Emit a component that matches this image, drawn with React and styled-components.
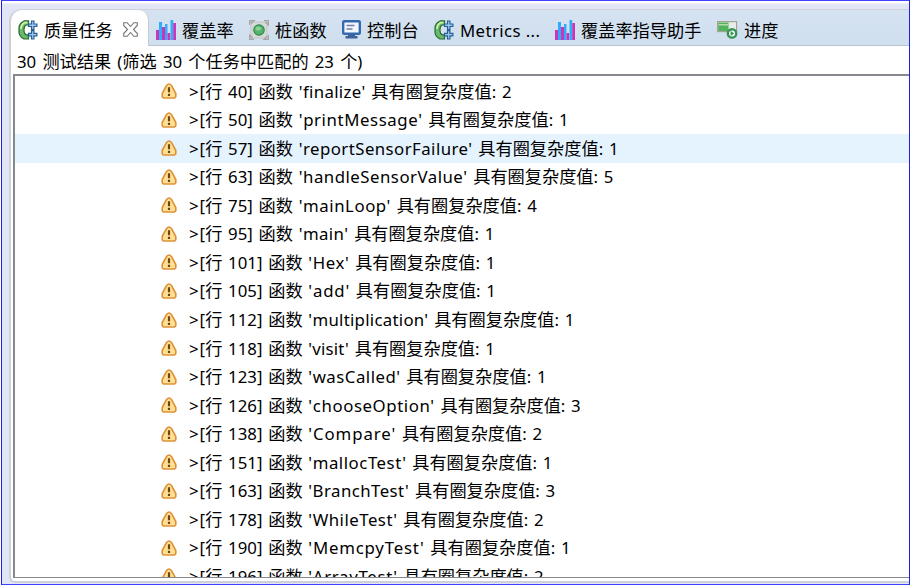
import styled, { createGlobalStyle } from 'styled-components'

const results = [
    { line: 40, name: 'finalize', value: 2, tracking: .35 },
    { line: 50, name: 'printMessage', value: 1, tracking: .6 },
    { line: 57, name: 'reportSensorFailure', value: 1, tracking: .45, hovered: true },
    { line: 63, name: 'handleSensorValue', value: 5, tracking: .5 },
    { line: 75, name: 'mainLoop', value: 4, tracking: .55 },
    { line: 95, name: 'main', value: 1, tracking: .4 },
    { line: 101, name: 'Hex', value: 1, tracking: .6 },
    { line: 105, name: 'add', value: 1, tracking: .8 },
    { line: 112, name: 'multiplication', value: 1, tracking: .28 },
    { line: 118, name: 'visit', value: 1, tracking: .2 },
    { line: 123, name: 'wasCalled', value: 1, tracking: .5 },
    { line: 126, name: 'chooseOption', value: 3, tracking: .6 },
    { line: 138, name: 'Compare', value: 2, tracking: .9 },
    { line: 151, name: 'mallocTest', value: 1, tracking: .54 },
    { line: 163, name: 'BranchTest', value: 3, tracking: .46 },
    { line: 178, name: 'WhileTest', value: 2, tracking: .5 },
    { line: 190, name: 'MemcpyTest', value: 1, tracking: .8 },
    { line: 196, name: 'ArrayTest', value: 2, tracking: .68 },
]

const QualityIcon = () => (
    <svg width="20" height="20" viewBox="0 0 20 20">
        <path d="M10.5 .8H6.5Q1 3.5 1 8v4q0 4.5 5 7h4.5v-4.2H8.3Q6 13.5 6 11V9q0-3 2.3-4h2.2z" fill="#6db86b" stroke="#226b35" strokeWidth="1.2" />
        <path d="M9.5 2.6H7Q3 4.5 3 9" fill="none" stroke="#d3f0a5" strokeWidth="1.7" />
        <path d="M13.5 1h2.4v3h3v2.5h-3v3h-2.4v-3h-3V4h3zM13.5 10.6h2.4v2.8h3v2.4h-3V19h-2.4v-3.2h-3v-2.4h3z" fill="#9bcbf2" stroke="#2a5f94" strokeWidth="1.2" />
    </svg>
)

const CoverageIcon = () => (
    <svg width="20" height="20" viewBox="0 0 20 20">
        <path d="M3 2h3v18H3zM9 4h2.5v16H9zM14.5 0h2.7v20h-2.7z" fill="#2caef8" />
        <path d="M0 10h3v10H0zM6 7h3v13H6zM11.5 13h2.7v7h-2.7zM17.2 3H20v17h-2.8z" fill="#cc35ba" />
    </svg>
)

const StubIcon = () => (
    <svg width="20" height="20" viewBox="0 0 20 20">
        <path d="M2 2h16v16H2z" fill="#d5d9d9" stroke="#c4c6c4" />
        <path d="M.7 5V.7H5L2 3.5M15 .7h4.3V5l-3-3M19.3 15v4.3H15l3-3M5 19.3H.7V15l3 3" fill="none" stroke="#a5a5a2" strokeWidth="1.3" />
        <circle cx="10" cy="10" r="5.2" fill="#54b36c" stroke="#308a4b" strokeWidth="1.2" />
        <ellipse cx="9.2" cy="8.4" rx="2.8" ry="2" fill="#8bd197" />
    </svg>
)

const ConsoleIcon = () => (
    <svg width="19" height="19" viewBox="0 0 19 19">
        <rect x="1.2" y="1.2" width="16.6" height="12.6" rx="1" fill="#f3f7fc" stroke="#3569ae" strokeWidth="2.4" />
        <path d="M4.5 5.5h8M4.5 9h6" stroke="#6c7eaa" strokeWidth="1.3" />
        <path d="M6 14.5h7V16h2.5v2.5h-12V16H6z" fill="#3e6297" />
    </svg>
)

const ProgressIcon = () => (
    <svg width="21" height="18" viewBox="0 0 21 18">
        <rect x=".6" y=".6" width="19" height="10" fill="#e6ece8" stroke="#a6a298" strokeWidth="1.2" />
        <path d="M1.2 1.6h10.3v8.4H1.2z" fill="#52b35d" />
        <path d="M1.5 3.8H11" stroke="#b1dda6" strokeWidth="1.6" />
        <circle cx="15" cy="12.4" r="4.2" fill="#fff" stroke="#369456" strokeWidth="2.4" />
        <path d="M13.6 9.8l3.6 2.6-3.6 2.6z" fill="#389851" />
    </svg>
)

const CloseIcon = () => (
    <svg width="15" height="15" viewBox="0 0 15 15">
        <path d="M.7.7h3.5l3.3 3.8L10.8.7h3.5v2.8L10.5 7.5l3.8 4v2.8h-3.5l-3.3-3.8-3.3 3.8H.7v-2.8l3.8-4L.7 3.5z" fill="#fff" stroke="#777" strokeWidth="1.1" />
    </svg>
)

const WarningIcon = () => (
    <svg width="16" height="16" viewBox="0 0 16 16">
        <path d="M5.6 2.4Q8-.4 10.4 2.4L14.8 10.5v3.2l-1.2 1.3H2.4l-1.2-1.3v-3.2z" fill="#ffdf94" stroke="#de9238" strokeWidth="1.6" strokeLinejoin="round" />
        <path d="M8 4.3v5M8 10.8v2.2" stroke="#6b4511" strokeWidth="2.2" />
    </svg>
)

const tabs = [
    { label: '质量任务', icon: <QualityIcon />, width: 138, active: true },
    { label: '覆盖率', icon: <CoverageIcon />, width: 93 },
    { label: '桩函数', icon: <StubIcon />, width: 93 },
    { label: '控制台', icon: <ConsoleIcon />, width: 92 },
    { label: 'Metrics ...', icon: <QualityIcon />, width: 121, latin: true },
    { label: '覆盖率指导助手', icon: <CoverageIcon />, width: 162 },
    { label: '进度', icon: <ProgressIcon />, width: 90 },
]

const App = () => {
    return (
        <Window>
            <GlobalStyle />
            <Folder>
                <TabBar>
                    {tabs.map(tab => (
                        <Tab key={tab.label} $active={tab.active} $width={tab.width}>
                            {tab.icon}
                            <TabLabel $latin={tab.latin}>{tab.label}</TabLabel>
                            {tab.active && <CloseIcon />}
                        </Tab>
                    ))}
                </TabBar>
                <Summary>
                    30 <Han>测试结果</Han> (<Han>筛选</Han> 30 <Han>个任务中匹配的</Han> 23 <Han>个</Han>)
                </Summary>
                <ResultList>
                    {results.map(({ line, name, value, tracking, hovered }) => (
                        <Row key={line} $hovered={hovered}>
                            <WarningIcon />
                            <Message>
                                <Arrow>&gt;</Arrow>[<Han>行</Han> {line}] <Han>函数</Han> <Name $tracking={tracking}>'{name}'</Name> <Han>具有圈复杂度值</Han>: {value}
                            </Message>
                        </Row>
                    ))}
                </ResultList>
            </Folder>
        </Window>
    )
}

export default App

const GlobalStyle = createGlobalStyle`
    * {
        box-sizing: border-box;
    }

    body {
        margin: 0;
        overflow: hidden;
        background: #fff;
    }
`

const Window = styled.div`
    width: 909px;
    height: 585px;
    margin-left: 1px;
    padding: 8px 0 1px 7px;
    border: 1px solid #2020e8;
    border-top-color: #4040ff;
    border-bottom-color: #4040ff;
    background: linear-gradient(#fff 0, #fff 2px, #e1e5f6 3px);
    font-family: "Noto Sans", "Noto Sans CJK SC", sans-serif;
    font-size: 16.8px;
    color: #000;
`

const Folder = styled.div`
    display: flex;
    flex-direction: column;
    height: 574px;
    border: 2px solid #ced1d7;
    border-top-width: 1px;
    border-right: none;
    border-radius: 12px 0 0 6px;
    background: #fff;
    overflow: hidden;
`

const TabBar = styled.div`
    display: flex;
    flex: none;
    height: 36px;
    background: linear-gradient(#d5e2f1, #cfdfee);
    box-shadow: inset 0 -1px #b9c3d2;
`

const Tab = styled.div`
    display: flex;
    align-items: center;
    flex: none;
    gap: 6px;
    width: ${props => props.$width}px;
    padding-left: 7px;
    padding-top: 3px;
    ${props => props.$active && `
        background: #fff;
        border-right: 1px solid #c7cbd3;
        border-radius: 12px 10px 0 0;
    `}

    svg {
        flex: none;
    }

    svg:last-child {
        margin-left: 4px;
    }
`

const TabLabel = styled.span`
    padding-top: 2px;
    font-size: ${props => props.$latin ? 16.8 : 17.2}px;
    letter-spacing: ${props => props.$latin ? '.4px' : 'normal'};
    line-height: 24px;
    white-space: pre;
`

const Han = styled.span`
    font-family: "Noto Sans CJK SC", sans-serif;
    font-size: 17.2px;
`

const Summary = styled.div`
    flex: none;
    height: 28px;
    padding-left: 6px;
    line-height: 30px;
    white-space: pre;
    word-spacing: 1.8px;
`

const ResultList = styled.div`
    flex: 1;
    min-height: 0;
    margin: 0 0 3px 2px;
    padding-top: 1px;
    border: 2px solid #85888e;
    border-right: none;
    border-bottom-width: 1px;
    overflow: hidden;
`

const Row = styled.div`
    display: flex;
    align-items: center;
    gap: 12px;
    height: 28.54px;
    padding-left: 146px;
    background: ${props => props.$hovered ? '#e5f3ff' : 'transparent'};
`

const Message = styled.span`
    line-height: 28px;
    white-space: pre;
    word-spacing: 1.4px;
`

const Arrow = styled.span`
    letter-spacing: 1px;
`

const Name = styled.span`
    letter-spacing: ${props => props.$tracking}px;
`
